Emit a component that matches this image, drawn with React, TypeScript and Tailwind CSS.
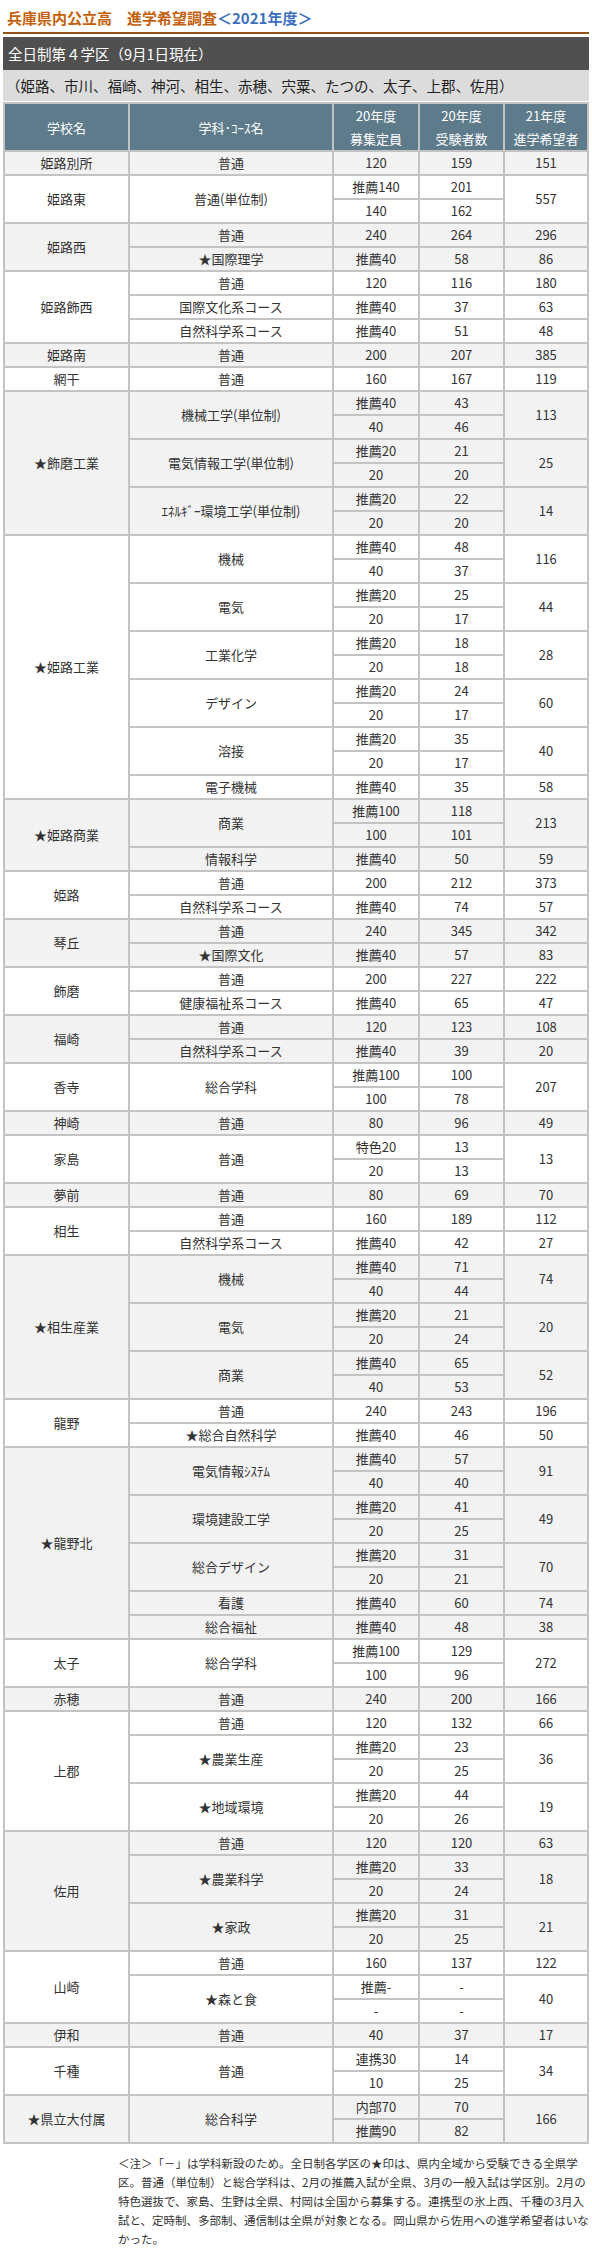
import React from "react";

type Sub = [string, string];
type Course = [string, Sub[], string];
type School = [string, Course[]];

const schools: School[] = [
  ["姫路別所", [["普通", [["120", "159"]], "151"]]],
  ["姫路東", [["普通(単位制)", [["推薦140", "201"], ["140", "162"]], "557"]]],
  ["姫路西", [["普通", [["240", "264"]], "296"], ["★国際理学", [["推薦40", "58"]], "86"]]],
  ["姫路飾西", [["普通", [["120", "116"]], "180"], ["国際文化系コース", [["推薦40", "37"]], "63"], ["自然科学系コース", [["推薦40", "51"]], "48"]]],
  ["姫路南", [["普通", [["200", "207"]], "385"]]],
  ["網干", [["普通", [["160", "167"]], "119"]]],
  ["★飾磨工業", [["機械工学(単位制)", [["推薦40", "43"], ["40", "46"]], "113"], ["電気情報工学(単位制)", [["推薦20", "21"], ["20", "20"]], "25"], ["ｴﾈﾙｷﾞｰ環境工学(単位制)", [["推薦20", "22"], ["20", "20"]], "14"]]],
  ["★姫路工業", [["機械", [["推薦40", "48"], ["40", "37"]], "116"], ["電気", [["推薦20", "25"], ["20", "17"]], "44"], ["工業化学", [["推薦20", "18"], ["20", "18"]], "28"], ["デザイン", [["推薦20", "24"], ["20", "17"]], "60"], ["溶接", [["推薦20", "35"], ["20", "17"]], "40"], ["電子機械", [["推薦40", "35"]], "58"]]],
  ["★姫路商業", [["商業", [["推薦100", "118"], ["100", "101"]], "213"], ["情報科学", [["推薦40", "50"]], "59"]]],
  ["姫路", [["普通", [["200", "212"]], "373"], ["自然科学系コース", [["推薦40", "74"]], "57"]]],
  ["琴丘", [["普通", [["240", "345"]], "342"], ["★国際文化", [["推薦40", "57"]], "83"]]],
  ["飾磨", [["普通", [["200", "227"]], "222"], ["健康福祉系コース", [["推薦40", "65"]], "47"]]],
  ["福崎", [["普通", [["120", "123"]], "108"], ["自然科学系コース", [["推薦40", "39"]], "20"]]],
  ["香寺", [["総合学科", [["推薦100", "100"], ["100", "78"]], "207"]]],
  ["神崎", [["普通", [["80", "96"]], "49"]]],
  ["家島", [["普通", [["特色20", "13"], ["20", "13"]], "13"]]],
  ["夢前", [["普通", [["80", "69"]], "70"]]],
  ["相生", [["普通", [["160", "189"]], "112"], ["自然科学系コース", [["推薦40", "42"]], "27"]]],
  ["★相生産業", [["機械", [["推薦40", "71"], ["40", "44"]], "74"], ["電気", [["推薦20", "21"], ["20", "24"]], "20"], ["商業", [["推薦40", "65"], ["40", "53"]], "52"]]],
  ["龍野", [["普通", [["240", "243"]], "196"], ["★総合自然科学", [["推薦40", "46"]], "50"]]],
  ["★龍野北", [["電気情報ｼｽﾃﾑ", [["推薦40", "57"], ["40", "40"]], "91"], ["環境建設工学", [["推薦20", "41"], ["20", "25"]], "49"], ["総合デザイン", [["推薦20", "31"], ["20", "21"]], "70"], ["看護", [["推薦40", "60"]], "74"], ["総合福祉", [["推薦40", "48"]], "38"]]],
  ["太子", [["総合学科", [["推薦100", "129"], ["100", "96"]], "272"]]],
  ["赤穂", [["普通", [["240", "200"]], "166"]]],
  ["上郡", [["普通", [["120", "132"]], "66"], ["★農業生産", [["推薦20", "23"], ["20", "25"]], "36"], ["★地域環境", [["推薦20", "44"], ["20", "26"]], "19"]]],
  ["佐用", [["普通", [["120", "120"]], "63"], ["★農業科学", [["推薦20", "33"], ["20", "24"]], "18"], ["★家政", [["推薦20", "31"], ["20", "25"]], "21"]]],
  ["山崎", [["普通", [["160", "137"]], "122"], ["★森と食", [["推薦-", "-"], ["-", "-"]], "40"]]],
  ["伊和", [["普通", [["40", "37"]], "17"]]],
  ["千種", [["普通", [["連携30", "14"], ["10", "25"]], "34"]]],
  ["★県立大付属", [["総合科学", [["内部70", "70"], ["推薦90", "82"]], "166"]]],
];

const notes = [
  "＜注＞「－」は学科新設のため。全日制各学区の★印は、県内全域から受験できる全県学",
  "区。普通（単位制）と総合学科は、2月の推薦入試が全県、3月の一般入試は学区別。2月の",
  "特色選抜で、家島、生野は全県、村岡は全国から募集する。連携型の氷上西、千種の3月入",
  "試と、定時制、多部制、通信制は全県が対象となる。岡山県から佐用への進学希望者はいな",
  "かった。",
];

const td = "p-0 h-[22px] text-center align-middle text-[13px] leading-[22px] text-[#333]";
const th = "p-0 h-[46px] text-center align-middle text-[13px] leading-[23px] font-normal text-white bg-[#5e7b8b]";

export default function App() {
  const rows: React.ReactNode[] = [];
  schools.forEach(([name, courses], si) => {
    const bg = si % 2 === 0 ? "bg-[#f2f2f2]" : "bg-white";
    const total = courses.reduce((a, c) => a + c[1].length, 0);
    let first = true;
    courses.forEach(([cname, subs, hope], ci) => {
      subs.forEach(([q, e], j) => {
        rows.push(
          <tr key={`${si}-${ci}-${j}`}>
            {first && (
              <td rowSpan={total} className={`${td} ${bg}`}>
                {name}
              </td>
            )}
            {j === 0 && (
              <td rowSpan={subs.length} className={`${td} ${bg}`}>
                {cname}
              </td>
            )}
            <td className={`${td} ${bg}`}>{q}</td>
            <td className={`${td} ${bg}`}>{e}</td>
            {j === 0 && (
              <td rowSpan={subs.length} className={`${td} ${bg}`}>
                {hope}
              </td>
            )}
          </tr>
        );
        first = false;
      });
    });
  });

  return (
    <div className="bg-white font-['Noto_Sans_CJK_JP',sans-serif] text-[#333] pb-[10px]">
      <div className="px-[3px] pt-[8px]">
        <h1 className="border-b-2 border-[#94521c] pb-[4px] pl-[4px] text-[15px] font-bold leading-[20px] text-[#c4600c]">
          兵庫県内公立高　進学希望調査<span className="text-[#3d6fc0]">＜2021年度＞</span>
        </h1>
        <div className="mt-[3px] h-[33px] bg-[#505050] px-[5px] text-[14.5px] leading-[33px] text-white">
          全日制第４学区（9月1日現在）
        </div>
        <div className="h-[31px] bg-[#dcdcdc] px-[3px] text-[14.5px] leading-[31px] text-[#222]">
          （姫路、市川、福崎、神河、相生、赤穂、宍粟、たつの、太子、上郡、佐用）
        </div>
        <table className="mt-[1px] w-full table-fixed border-separate border-spacing-[2px] bg-[#c3c3c3]">
          <colgroup>
            <col className="w-[123px]" />
            <col className="w-[202px]" />
            <col className="w-[84px]" />
            <col className="w-[83px]" />
            <col className="w-[82px]" />
          </colgroup>
          <thead>
            <tr>
              <th className={th}>学校名</th>
              <th className={th}>学科･ｺｰｽ名</th>
              <th className={th}>
                20年度
                <br />
                募集定員
              </th>
              <th className={th}>
                20年度
                <br />
                受験者数
              </th>
              <th className={th}>
                21年度
                <br />
                進学希望者
              </th>
            </tr>
          </thead>
          <tbody>{rows}</tbody>
        </table>
      </div>
      <div className="mt-[10px] ml-[118px] text-[11.5px] leading-[19px] text-[#333]">
        {notes.map((n, i) => (
          <span key={i} className="block whitespace-nowrap">
            {n}
          </span>
        ))}
      </div>
    </div>
  );
}
